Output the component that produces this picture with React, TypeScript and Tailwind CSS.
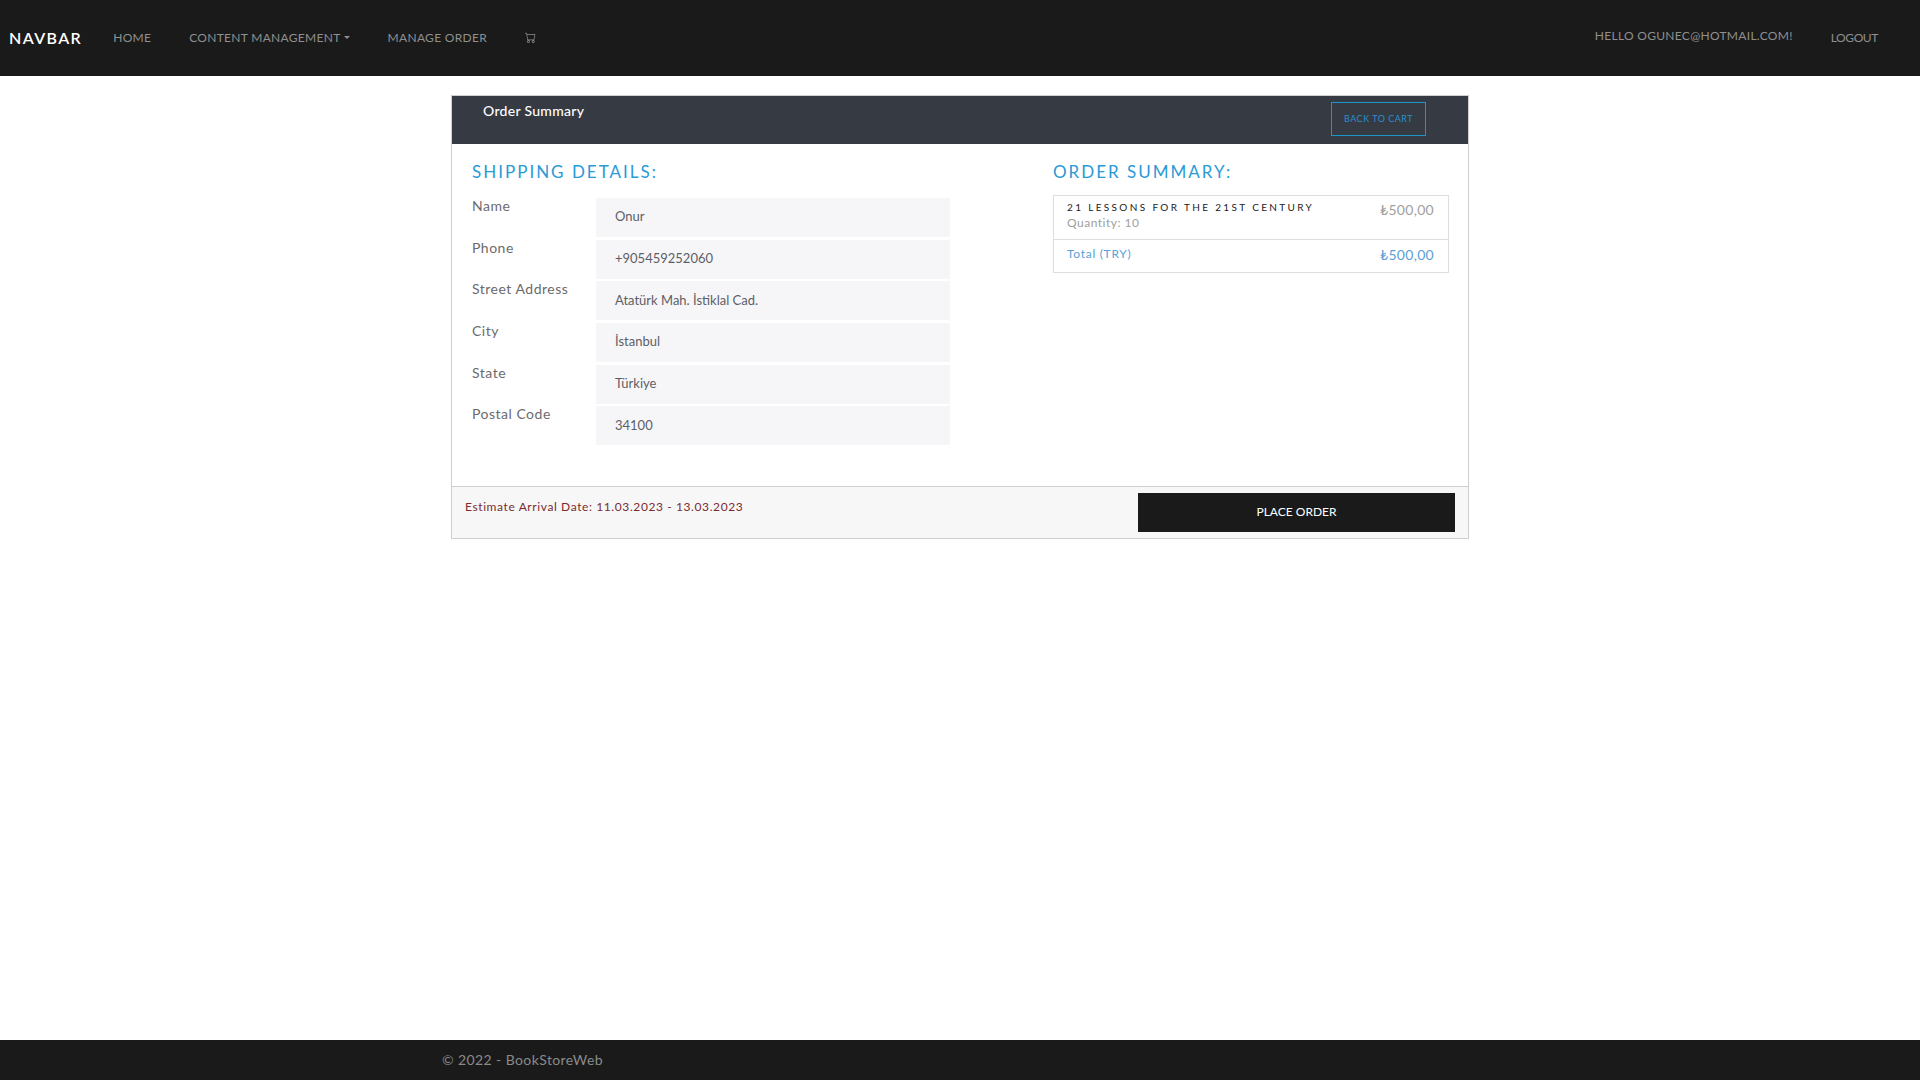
import { BsCart } from 'react-icons/bs';

const fields = [
	{ label: 'Name', value: 'Onur' },
	{ label: 'Phone', value: '+905459252060' },
	{ label: 'Street Address', value: 'Atatürk Mah. İstiklal Cad.' },
	{ label: 'City', value: 'İstanbul' },
	{ label: 'State', value: 'Türkiye' },
	{ label: 'Postal Code', value: '34100' },
];

const App = () => {
	return (
		<div className="flex h-screen flex-col bg-white font-['Lato',sans-serif] text-[14px] text-[#6b6b6b]">
			<nav className="flex h-[76px] shrink-0 items-center bg-[#1a1a1a] pb-[1px] pl-[9px] pr-[42px] text-[12px] uppercase text-[#8f8f8f]">
				<a className="mr-[31px] text-[16px] font-semibold tracking-[1.4px] text-white">Navbar</a>
				<div className="flex items-center gap-[38px]">
					<a className="tracking-[0.3px]">Home</a>
					<a className="flex items-center tracking-[0.3px]">
						Content Management
						<span className="ml-[3px] h-0 w-0 border-x-[3px] border-t-[3px] border-x-transparent border-t-[#8f8f8f]" />
					</a>
					<a className="tracking-[0.3px]">Manage Order</a>
					<BsCart size={11} />
				</div>
				<div className="ml-auto flex items-center gap-[38px]">
					<span className="mb-[4px] tracking-[0.3px]">Hello ogunec@hotmail.com!</span>
					<a className="tracking-[-0.4px]">Logout</a>
				</div>
			</nav>

			<main className="flex-1">
				<div className="mx-auto mt-[19px] flex h-[444px] w-[1018px] flex-col border border-[#cfcfcf]">
					<div className="flex h-[48px] shrink-0 justify-between bg-[#363a42] pl-[31px] pr-[42px]">
						<h5 className="pt-[4px] text-[14px] font-medium tracking-[0.3px] text-white">Order Summary</h5>
						<a className="mt-[6px] flex h-[34px] w-[95px] items-center justify-center border border-[#1a96c8] text-[9px] uppercase tracking-[0.5px] text-[#2a8fd0]">
							Back to cart
						</a>
					</div>

					<div className="flex flex-1 pl-[20px]">
						<section className="w-[581px]">
							<h3 className="mb-[14px] mt-[16px] text-[17px] uppercase leading-[24px] tracking-[2px] text-[#2a9ad6]">
								Shipping Details:
							</h3>
							{fields.map(field => (
								<div key={field.label} className="mb-[2.67px] flex">
									<label className="w-[124px] leading-[16px] tracking-[0.5px]">{field.label}</label>
									<div className="flex h-[39px] w-[354px] items-center bg-[#f6f6f8] pb-[1px] pl-[19px] text-[13px] text-[#5e5e66]">
										{field.value}
									</div>
								</div>
							))}
						</section>

						<section className="w-[396px]">
							<h3 className="mb-[11px] mt-[16px] text-[17px] uppercase leading-[24px] tracking-[2px] text-[#2a9ad6]">
								Order Summary:
							</h3>
							<div className="border border-[#dedede]">
								<div className="flex h-[44px] justify-between border-b border-[#dedede] pl-[13px] pr-[14px]">
									<div>
										<p className="mt-[4px] text-[10px] uppercase leading-[15px] tracking-[2.35px] text-[#222]">
											21 Lessons for the 21st Century
										</p>
										<p className="text-[12px] leading-[16px] tracking-[0.5px] text-[#a0a0a0]">Quantity: 10</p>
									</div>
									<span className="mt-[4px] text-[14px] leading-[20px] tracking-[0.3px] text-[#a0a0a0]">₺500,00</span>
								</div>
								<div className="flex h-[32px] justify-between pl-[13px] pr-[14px] text-[#5ba0d8]">
									<span className="mt-[6px] text-[12px] leading-[16px] tracking-[0.7px]">Total (TRY)</span>
									<span className="mt-[5px] text-[14px] leading-[20px] tracking-[0.3px]">₺500,00</span>
								</div>
							</div>
						</section>
					</div>

					<div className="flex h-[52px] shrink-0 justify-between border-t border-[#cfcfcf] bg-[#f7f7f7] pl-[13px] pr-[13px]">
						<p className="mt-[12px] text-[12px] leading-[16px] tracking-[0.6px] text-[#7a2c30]">
							Estimate Arrival Date: 11.03.2023 - 13.03.2023
						</p>
						<button className="mt-[6px] h-[39px] w-[317px] bg-[#1a1a1a] pb-[2px] text-[12px] uppercase text-white">Place Order</button>
					</div>
				</div>
			</main>

			<footer className="flex h-[40px] shrink-0 items-center bg-[#1a1a1a] pb-[2px] pl-[442px] text-[14px] tracking-[0.4px] text-[#8a8a8a]">
				© 2022 - BookStoreWeb
			</footer>
		</div>
	);
};

export default App;
